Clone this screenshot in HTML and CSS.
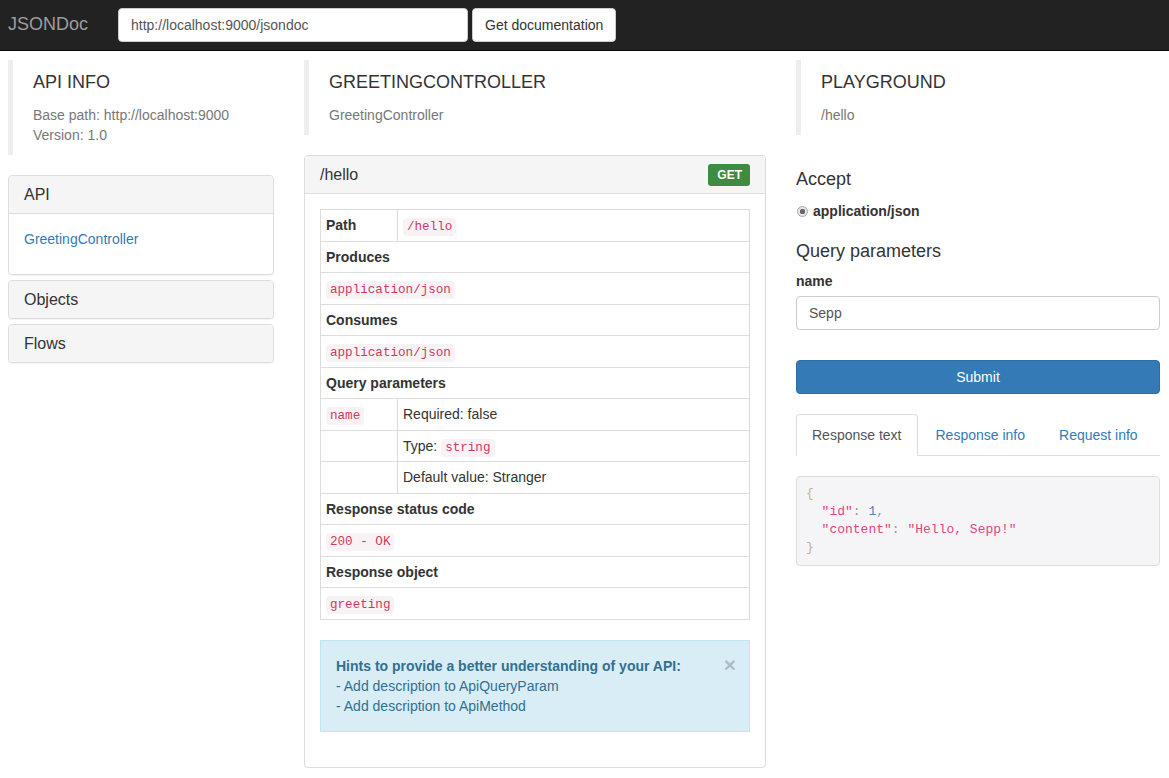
FILE: index.html
```html
<!DOCTYPE html>
<html>
<head>
<meta charset="utf-8">
<title>JSONDoc</title>
<link rel="stylesheet" href="styles.css">
</head>
<body>
<nav class="navbar">
  <span class="brand">JSONDoc</span>
  <form class="nav-form">
    <input class="url-input" type="text" value="http://localhost:9000/jsondoc">
    <button class="btn-default" type="button">Get documentation</button>
  </form>
</nav>
<div class="layout">
  <div class="col">
    <div class="quote">
      <h4 class="quote-title">API INFO</h4>
      <div class="quote-text">Base path: http://localhost:9000</div>
      <div class="quote-text">Version: 1.0</div>
    </div>
    <div class="panel-group">
      <div class="panel">
        <div class="panel-heading">API</div>
        <div class="panel-body">
          <ul class="link-list"><li><a class="link" href="#">GreetingController</a></li></ul>
        </div>
      </div>
      <div class="panel">
        <div class="panel-heading">Objects</div>
      </div>
      <div class="panel">
        <div class="panel-heading">Flows</div>
      </div>
    </div>
  </div>

  <div class="col">
    <div class="quote">
      <h4 class="quote-title">GREETINGCONTROLLER</h4>
      <div class="quote-text">GreetingController</div>
    </div>
    <div class="panel panel-method">
      <div class="panel-heading heading-flex">
        <span>/hello</span>
        <span class="label-get">GET</span>
      </div>
      <div class="panel-body">
        <table class="doc-table">
          <colgroup><col class="col-first"><col></colgroup>
          <tr><th>Path</th><td><code>/hello</code></td></tr>
          <tr><th colspan="2">Produces</th></tr>
          <tr><td colspan="2"><code>application/json</code></td></tr>
          <tr><th colspan="2">Consumes</th></tr>
          <tr><td colspan="2"><code>application/json</code></td></tr>
          <tr><th colspan="2">Query parameters</th></tr>
          <tr><td><code>name</code></td><td>Required: false</td></tr>
          <tr><td></td><td>Type: <code>string</code></td></tr>
          <tr><td></td><td>Default value: Stranger</td></tr>
          <tr><th colspan="2">Response status code</th></tr>
          <tr><td colspan="2"><code>200 - OK</code></td></tr>
          <tr><th colspan="2">Response object</th></tr>
          <tr><td colspan="2"><code>greeting</code></td></tr>
        </table>
        <div class="alert">
          <span class="close">&times;</span>
          <strong>Hints to provide a better understanding of your API:</strong>
          <div>- Add description to ApiQueryParam</div>
          <div>- Add description to ApiMethod</div>
        </div>
      </div>
    </div>
  </div>

  <div class="col">
    <div class="quote">
      <h4 class="quote-title">PLAYGROUND</h4>
      <div class="quote-text">/hello</div>
    </div>
    <h4 class="section-title accept-title">Accept</h4>
    <label class="radio-row"><span class="radio-dot"></span>application/json</label>
    <h4 class="section-title qp-title">Query parameters</h4>
    <label class="field-label">name</label>
    <input class="field-input" type="text" value="Sepp">
    <button class="btn-primary" type="button">Submit</button>
    <ul class="tabs">
      <li class="tab active">Response text</li>
      <li class="tab">Response info</li>
      <li class="tab">Request info</li>
    </ul>
<pre class="response"><span class="p">{</span>
  <span class="k">"id"</span><span class="c">:</span> <span class="n">1</span><span class="c">,</span>
  <span class="k">"content"</span><span class="c">:</span> <span class="s">"Hello, Sepp!"</span>
<span class="p">}</span></pre>
  </div>
</div>
</body>
</html>
```
FILE: styles.css
```css
* { box-sizing: border-box; }
html, body { margin: 0; padding: 0; }
body {
  font-family: "Liberation Sans", Arial, sans-serif;
  font-size: 14px;
  line-height: 20px;
  color: #333;
  background: #fff;
  overflow: hidden;
}
.navbar {
  height: 51px;
  background: #222;
  border-bottom: 1px solid #080808;
  display: flex;
  align-items: center;
  padding: 0 8px;
}
.brand {
  font-size: 18px;
  color: #9d9d9d;
  line-height: 20px;
  margin-right: 30px;
  margin-top: -2px;
}
.nav-form { display: flex; gap: 4px; align-items: center; margin-top: -1px; }
.url-input {
  width: 350px;
  height: 34px;
  padding: 6px 12px;
  font: 14px "Liberation Sans", Arial, sans-serif;
  color: #555;
  border: 1px solid #ccc;
  border-radius: 4px;
  background: #fff;
}
.btn-default {
  height: 34px;
  padding: 6px 12px;
  font: 14px "Liberation Sans", Arial, sans-serif;
  color: #333;
  background: #fff;
  border: 1px solid #ccc;
  border-radius: 4px;
}
.layout {
  display: grid;
  grid-template-columns: 266px 462px 364px;
  column-gap: 30px;
  padding: 9px 9px 0 8px;
}
.col { min-width: 0; }
.quote {
  border-left: 5px solid #eee;
  padding: 10px 20px;
  margin: 0 0 20px;
}
.quote-title {
  font-size: 18px;
  font-weight: 500;
  line-height: 22px;
  margin: 1px 0 12px;
}
.quote-text { color: #777; }
.panel-group { display: flex; flex-direction: column; gap: 5px; }
.panel {
  border: 1px solid #ddd;
  border-radius: 4px;
  background: #fff;
  box-shadow: 0 1px 1px rgba(0,0,0,.05);
}
.panel-heading {
  background: #f5f5f5;
  padding: 10px 15px;
  font-size: 16px;
  line-height: 17px;
  border-radius: 3px 3px 0 0;
}
.panel > .panel-heading:only-child { border-radius: 3px; }
.panel-heading + .panel-body { border-top: 1px solid #ddd; }
.panel-body { padding: 15px; }
.link-list { list-style: none; margin: 0 0 10px; padding: 0; }
.link { color: #337ab7; text-decoration: none; }
.heading-flex {
  display: flex;
  justify-content: space-between;
  align-items: center;
}
.label-get {
  background: #3f8b43;
  color: #fff;
  font-weight: bold;
  font-size: 12px;
  line-height: 14px;
  padding: 4px 8px 4px 9px;
  border-radius: 3px;
  margin: -3px 0;
}
.doc-table {
  width: 100%;
  border-collapse: collapse;
  table-layout: fixed;
  margin-bottom: 20px;
}
.col-first { width: 77px; }
.doc-table th, .doc-table td {
  border: 1px solid #ddd;
  padding: 5px;
  height: 31.5px;
  line-height: 20px;
  text-align: left;
  vertical-align: middle;
}
.doc-table th { font-weight: bold; }
code {
  font-family: "Liberation Mono", "Courier New", monospace;
  font-size: 12.6px;
  line-height: 1;
  color: #cc3a64;
  background: #f9f2f4;
  padding: 2px 4px;
  border-radius: 4px;
}
.alert {
  background: #d9edf7;
  border: 1px solid #bce8f1;
  color: #31708f;
  padding: 15px;
  margin-bottom: 20px;
}
.close {
  float: right;
  font-size: 21px;
  font-weight: bold;
  line-height: 1;
  color: #000;
  opacity: .2;
  position: relative;
  top: -2px;
  right: -2px;
}
.section-title {
  font-size: 18px;
  font-weight: 500;
  line-height: 20px;
  margin: 0;
}
.accept-title { margin-top: 34px; }
.radio-row {
  display: flex;
  align-items: center;
  font-weight: bold;
  margin-top: 12px;
  line-height: 20px;
}
.radio-dot {
  width: 11px;
  height: 11px;
  border-radius: 50%;
  border: 1px solid #a8a8a8;
  background: radial-gradient(circle, #6a6a6a 0 2.5px, #e6e6e6 3px);
  margin: 0 5px 0 1px;
}
.qp-title { margin-top: 20px; }
.field-label {
  display: block;
  font-weight: bold;
  margin-top: 10px;
  margin-bottom: 5px;
}
.field-input {
  display: block;
  width: 100%;
  height: 34px;
  padding: 6px 12px;
  font: 14px "Liberation Sans", Arial, sans-serif;
  color: #555;
  border: 1px solid #ccc;
  border-radius: 4px;
}
.btn-primary {
  display: block;
  width: 100%;
  height: 34px;
  margin-top: 30px;
  font: 14px "Liberation Sans", Arial, sans-serif;
  color: #fff;
  background: #337ab7;
  border: 1px solid #2e6da4;
  border-radius: 4px;
}
.tabs {
  list-style: none;
  margin: 20px 0 0;
  padding: 0;
  display: flex;
  border-bottom: 1px solid #ddd;
}
.tab {
  padding: 10px 15px;
  line-height: 20px;
  border: 1px solid transparent;
  border-radius: 4px 4px 0 0;
  margin-right: 2px;
  margin-bottom: -1px;
  color: #337ab7;
}
.tab.active {
  color: #555;
  background: #fff;
  border-color: #ddd #ddd transparent;
}
.response {
  margin: 20px 0 0;
  padding: 8px 9px;
  font-family: "Liberation Mono", "Courier New", monospace;
  font-size: 13px;
  line-height: 18px;
  background: #f5f5f7;
  border: 1px solid #ddd;
  border-radius: 4px;
  color: #333;
}
.response .p { color: #c4b48e; }
.response .k { color: #e0457b; }
.response .s { color: #e0457b; }
.response .n { color: #4f7fbf; }
.response .c { color: #999; }
```
